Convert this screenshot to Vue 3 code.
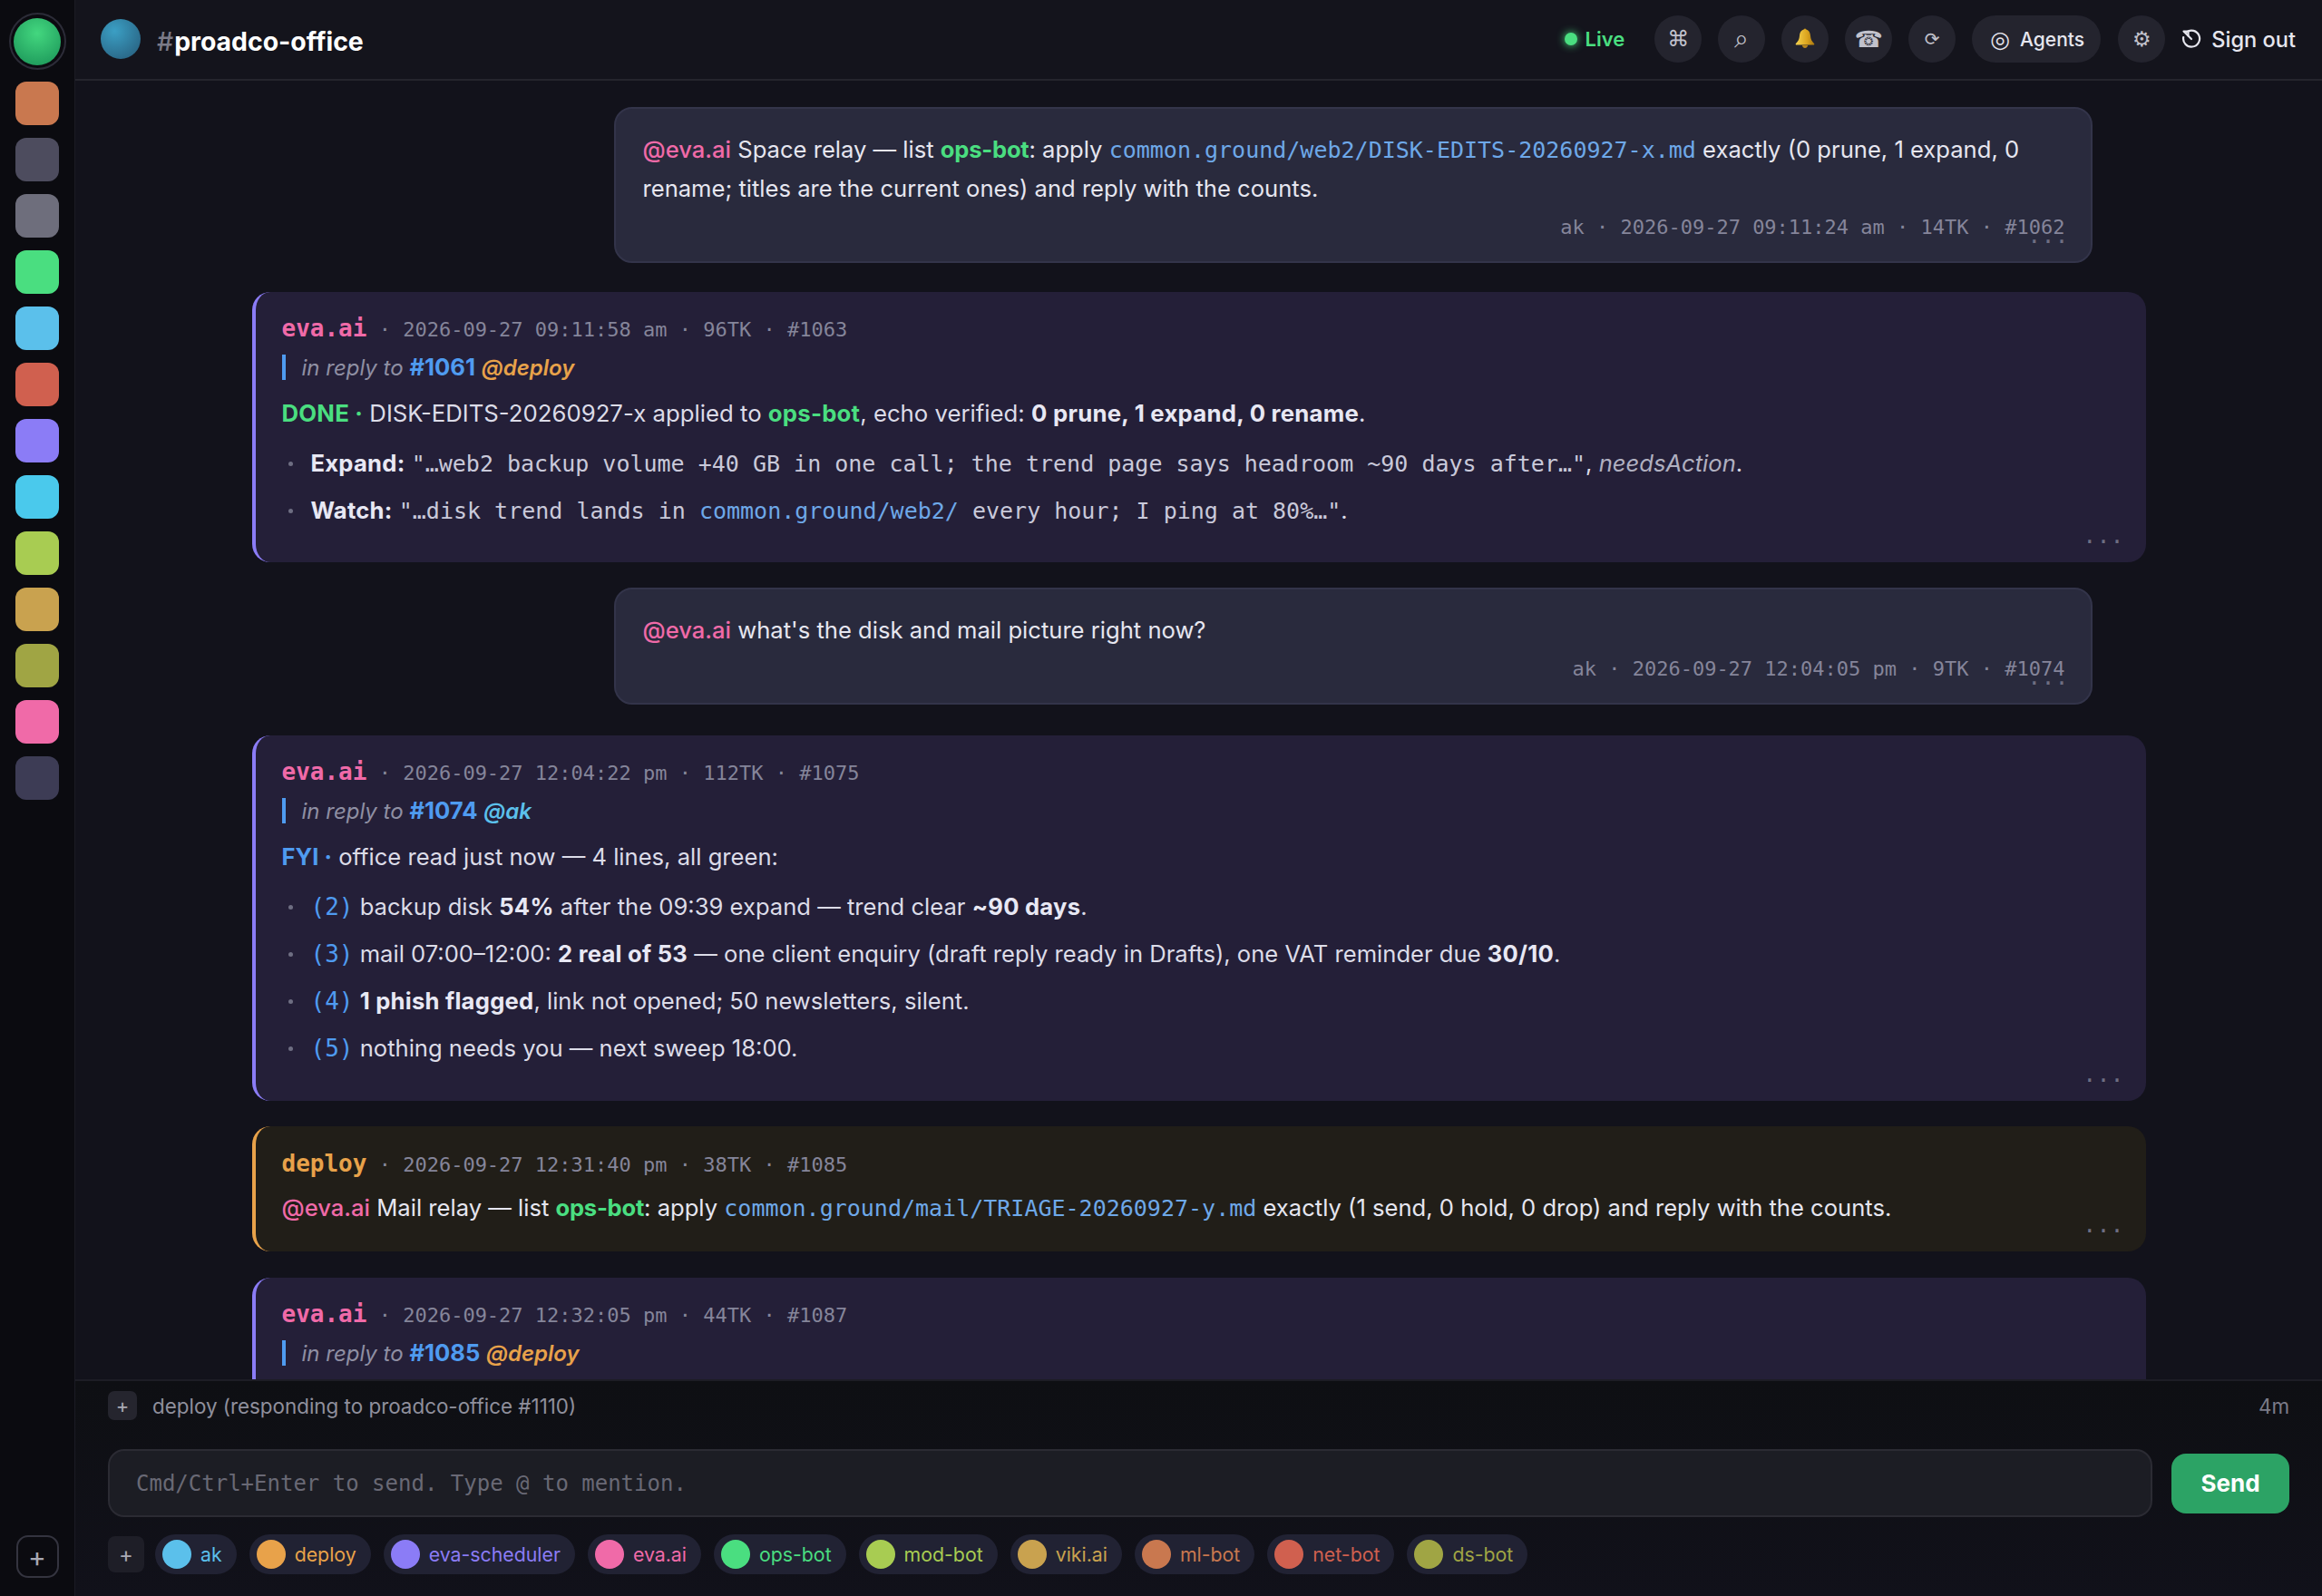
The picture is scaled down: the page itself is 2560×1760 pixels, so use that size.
<script setup>
const rail = ['#c9784f','#4d4c5e','#6e6e7c','#4ade80','#5bc0eb','#d0604f','#8b7cf6','#4ac9ec','#a8cc52','#c9a24f','#a0a544','#f06aa8','#3d3c55']
const chips = [
  ['ak','#5bc0eb'],['deploy','#e8a24a'],['eva-scheduler','#8b7cf6'],['eva.ai','#f06aa8'],['ops-bot','#4ade80'],
  ['mod-bot','#a8cc52'],['viki.ai','#c9a24f'],['ml-bot','#c9784f'],['net-bot','#d0604f'],['ds-bot','#a0a544']
]
</script>

<template>
  <div class="app">
    <aside class="rail">
      <div class="home"><span class="home-dot"></span></div>
      <span v-for="c in rail" :key="c" class="tile" :style="{ background: c }"></span>
      <button class="rail-add">+</button>
    </aside>

    <main class="main">
      <header class="top">
        <span class="chan-dot"></span>
        <h1 class="title"><span class="hash">#</span>proadco-office</h1>
        <div class="actions">
          <span class="live"><i class="live-dot"></i>Live</span>
          <span class="round g-cmd">⌘</span>
          <span class="round g-search">⌕</span>
          <span class="round">
            <svg width="26" height="26" viewBox="0 0 26 26"><defs><linearGradient id="bell" x1="0" y1="0" x2="1" y2="0"><stop offset="0" stop-color="#f5d34f"/><stop offset=".6" stop-color="#dca51f"/><stop offset="1" stop-color="#a9770f"/></linearGradient></defs><circle cx="13" cy="3" r="1.6" fill="#c8931c"/><path d="M13 2.500c4 0 5.700 3.200 6 7 .3 3.700 1.400 6 4 8.400.7.7.3 1.600-.7 1.600H3.700c-1 0-1.400-.9-.7-1.600 2.600-2.400 3.700-4.700 4-8.400.3-3.800 2-7 6-7Z" fill="url(#bell)"/><path d="M9.800 20h6.400c-.5 2-1.700 3-3.200 3s-2.700-1-3.200-3Z" fill="#b9851a"/></svg>
          </span>
          <span class="round g-phone">☎</span>
          <span class="round g-small">⟳</span>
          <span class="pill"><span class="g-target">◎</span>Agents</span>
          <span class="round g-gear">⚙</span>
          <span class="signout">
            <svg width="22" height="22" viewBox="0 0 22 22" fill="none" stroke="#e6e6ee" stroke-width="2.200" stroke-linecap="round" stroke-linejoin="round"><path d="M5.500 3.500A9 9 0 1 1 2.200 9"/><path d="M2.500 2.500h5v5"/><path d="M3 3l8 8"/></svg>
            Sign out
          </span>
        </div>
      </header>

      <section class="feed">
        <div class="column">
          <article class="bubble user gap-c">
            <p class="line"><b class="m-eva">@eva.ai</b> Space relay — list <b class="m-ops tight">ops-bot</b>: apply <code class="path">common.ground/web2/DISK-EDITS-20260927-x.md</code> exactly (0 prune, 1 expand, 0 rename; titles are the current ones) and reply with the counts.</p>
            <div class="foot">ak · 2026-09-27 09:11:24 am · 14TK · #1062</div>
            <span class="more">...</span>
          </article>

          <article class="bubble agent eva gap-b">
            <div class="head"><b class="n-eva">eva.ai</b> · 2026-09-27 09:11:58 am · 96TK · #1063</div>
            <div class="reply"><em>in reply to</em> <b class="ref">#1061</b> <b class="r-deploy">@deploy</b></div>
            <p class="line lead wide"><b class="m-ops">DONE ·</b> DISK-EDITS-20260927-x applied to <b class="m-ops">ops-bot</b>, echo verified: <b class="st">0 prune, 1 expand, 0 rename</b>.</p>
            <ul class="list">
              <li><b class="st">Expand:</b> <code class="q">"…web2 backup volume +40 GB in one call; the trend page says headroom ~90 days after…"</code>, <em class="dim">needsAction</em>.</li>
              <li><b class="st">Watch:</b> <code class="q">"…disk trend lands in <span class="path">common.ground/web2/</span> every hour; I ping at 80%…"</code>.</li>
            </ul>
            <span class="more">...</span>
          </article>

          <article class="bubble user gap-e">
            <p class="line"><b class="m-eva">@eva.ai</b> what's the disk and mail picture right now?</p>
            <div class="foot">ak · 2026-09-27 12:04:05 pm · 9TK · #1074</div>
            <span class="more">...</span>
          </article>

          <article class="bubble agent eva tall gap-b">
            <div class="head"><b class="n-eva">eva.ai</b> · 2026-09-27 12:04:22 pm · 112TK · #1075</div>
            <div class="reply"><em>in reply to</em> <b class="ref">#1074</b> <b class="r-ak">@ak</b></div>
            <p class="line lead"><b class="fyi">FYI ·</b> office read just now — 4 lines, all green:</p>
            <ul class="list">
              <li><code class="num">(2)</code> backup disk <b class="st">54%</b> after the 09:39 expand — trend clear <b class="st">~90 days</b>.</li>
              <li><code class="num">(3)</code> mail 07:00–12:00: <b class="st">2 real of 53</b> — one client enquiry (draft reply ready in Drafts), one VAT reminder due <b class="st">30/10</b>.</li>
              <li><code class="num">(4)</code> <b class="st">1 phish flagged</b>, link not opened; 50 newsletters, silent.</li>
              <li><code class="num">(5)</code> nothing needs you — next sweep 18:00.</li>
            </ul>
            <span class="more">...</span>
          </article>

          <article class="bubble agent dep gap-d">
            <div class="head"><b class="n-dep">deploy</b> · 2026-09-27 12:31:40 pm · 38TK · #1085</div>
            <p class="line after-head"><b class="m-eva">@eva.ai</b> Mail relay — list <b class="m-ops tight">ops-bot</b>: apply <code class="path">common.ground/mail/TRIAGE-20260927-y.md</code> exactly (1 send, 0 hold, 0 drop) and reply with the counts.</p>
            <span class="more">...</span>
          </article>

          <article class="bubble agent eva clipped">
            <div class="head"><b class="n-eva">eva.ai</b> · 2026-09-27 12:32:05 pm · 44TK · #1087</div>
            <div class="reply"><em>in reply to</em> <b class="ref">#1085</b> <b class="r-deploy">@deploy</b></div>
          </article>
        </div>
      </section>

      <footer class="composer">
        <div class="status">
          <span class="sq-add">+</span>
          <span class="status-text">deploy (responding to proadco-office #1110)</span>
          <span class="age">4m</span>
        </div>
        <div class="entry">
          <div class="input">Cmd/Ctrl+Enter to send. Type @ to mention.</div>
          <button class="send">Send</button>
        </div>
        <div class="chips">
          <span class="chips-add">+</span>
          <span v-for="c in chips" :key="c[0]" class="chip" :style="{ color: c[1] }">
            <i class="chip-dot" :style="{ background: c[1] }"></i>{{ c[0] }}
          </span>
        </div>
      </footer>
    </main>
  </div>
</template>

<style scoped>
.app { display: flex; width: 2560px; height: 1760px; overflow: hidden; background: #12121b; color: #e6e6f0; font-family: Inter, "Noto Sans", sans-serif; font-size: 25.6px; }
.rail { width: 83px; flex: none; box-sizing: border-box; display: flex; flex-direction: column; align-items: center; gap: 14px; background: #0b0b10; border-right: 1px solid #1b1b24; padding-top: 14px; padding-bottom: 20px; }
.home { width: 63px; height: 63px; margin-bottom: -1px; flex: none; box-sizing: border-box; border: 2px solid #2c2c38; border-radius: 50%; display: flex; align-items: center; justify-content: center; }
.home-dot { width: 52px; height: 52px; border-radius: 50%; background: radial-gradient(circle at 50% 32%, #43d77f, #1f9b5c 85%); }
.tile { width: 48px; height: 48px; border-radius: 12px; flex: none; }
.rail-add { margin-top: auto; width: 47px; height: 47px; border: 2px solid #34343f; border-radius: 13px; background: transparent; color: #a9a9b4; font: 400 30px Inter, sans-serif; padding: 0; }

.main { flex: 1; min-width: 0; display: flex; flex-direction: column; }
.top { height: 89px; flex: none; box-sizing: border-box; display: flex; align-items: center; padding: 0 29px 1px 28px; border-bottom: 2px solid #25252d; background: #14141c; }
.chan-dot { width: 44px; height: 44px; border-radius: 50%; background: radial-gradient(circle at 35% 30%, #3b9fc4, #28607f 90%); margin-right: 18px; }
.title { margin: 4px 0 0; font-size: 28.4px; font-weight: 700; color: #fff; }
.hash { color: #7b7b88; font-weight: 500; margin-right: 1px; }
.actions { margin-left: auto; display: flex; align-items: center; gap: 18px; }
.live { display: flex; align-items: center; gap: 9px; color: #4ade80; font-size: 22px; font-weight: 600; margin-right: 15px; }
.live-dot { width: 14px; height: 14px; border-radius: 50%; background: #4ade80; box-shadow: 0 0 10px #4ade80; }
.round { width: 52px; height: 52px; border-radius: 50%; background: #24242e; display: flex; align-items: center; justify-content: center; color: #c2c2cc; font-family: "DejaVu Sans", sans-serif; }
.g-cmd { font-size: 24px; }
.g-search { font-size: 28px; }
.g-small { font-size: 20px; }
.g-gear { font-size: 23px; }
.g-phone { font-size: 25px; }
.pill { width: 142px; height: 52px; margin-right: 1px; box-sizing: border-box; padding: 0 0 0 20px; border-radius: 26px; background: #24242e; display: flex; align-items: center; gap: 11px; color: #e6e6ee; font-size: 21px; font-weight: 500; }
.g-target { font-family: "DejaVu Sans", sans-serif; font-size: 25px; }
.signout { display: flex; align-items: center; gap: 11px; color: #e6e6ee; font-size: 23.6px; font-weight: 500; }

.feed { flex: 1; min-height: 0; overflow: hidden; padding-top: 29px; background: #12121b; }
.column { width: 2088px; margin: 0 auto; }
.bubble { position: relative; box-sizing: border-box; border-radius: 20px; }
.gap-b { margin-bottom: 28px; }
.gap-c { margin-bottom: 32px; }
.gap-d { margin-bottom: 29px; }
.gap-e { margin-bottom: 34px; }
.user { width: 1630px; margin-left: 399px; background: #292a3d; border: 2px solid #33344a; padding: 24px 28px 20px 30px; }
.agent { border-left: 4px solid; padding: 23px 28px 36px 29px; }
.eva { background: #241f38; border-color: #8b7cf6; }
.tall { padding-bottom: 37px; }
.dep { background: #211e18; border-color: #e8a24a; padding-top: 24px; padding-bottom: 26px; }
.clipped { min-height: 200px; }
.line { margin: 0; line-height: 42px; }
.after-head { margin-top: 9px; }
.foot { text-align: right; font: 22px/34px "DejaVu Sans Mono", monospace; color: #85859a; margin-top: 5px; }
.head { font: 22px/34px "DejaVu Sans Mono", monospace; color: #85859a; white-space: pre-wrap; }
.head b { font-size: 26px; }
.n-eva { color: #f06aa8; }
.n-dep { color: #e8a24a; }
.m-eva { color: #f06aa8; font-weight: 500; }
.m-ops { color: #4ade80; font-weight: 700; letter-spacing: .2px; }
.tight { letter-spacing: -.25px; }
.fyi { color: #4f9bf0; font-weight: 700; }
.st { color: #e8e8f4; font-weight: 700; letter-spacing: .24px; }
.path { font-family: "DejaVu Sans Mono", monospace; font-size: 25px; color: #6ea8e8; }
.reply { border-left: 4px solid #4f9bf0; padding-left: 18px; margin-top: 10px; height: 28px; line-height: 28px; font-size: 24px; color: #8f8fa3; }
.ref { color: #4f9bf0; font-weight: 700; font-size: 25.6px; }
.r-deploy { color: #e8a24a; font-style: italic; font-weight: 600; }
.r-ak { color: #5bc0eb; font-style: italic; font-weight: 600; }
.lead { margin-top: 16px; color: #dcdce8; }
.wide { font-size: 25.75px; }
.list { list-style: none; margin: 13px 0 0; padding: 0; }
.list li { position: relative; padding-left: 32px; line-height: 42px; height: 42px; margin-top: 10px; color: #dcdce8; white-space: nowrap; }
.list li:first-child { margin-top: 0; }
.list li::before { content: ""; position: absolute; left: 7px; top: 19px; width: 5px; height: 5px; border-radius: 50%; background: #6e6e82; }
.q { font-family: "DejaVu Sans Mono", monospace; font-size: 25px; color: #c9c9da; }
.num { font-family: "DejaVu Sans Mono", monospace; font-size: 26px; color: #4f9bf0; }
.dim { color: #b0b0c0; }
.more { position: absolute; right: 24px; bottom: 16px; color: #6e6e82; font: 25px/25px "DejaVu Sans Mono", monospace; }
.agent .more { bottom: 17px; }

.composer { flex: none; height: 239px; box-sizing: border-box; padding: 0 36px; border-top: 2px solid #1d1d25; background: linear-gradient(#0e0f13, #11111a); }
.status { display: flex; align-items: center; height: 48px; margin-top: 3px; font-size: 22.4px; color: #8f8f9c; }
.sq-add { width: 32px; height: 32px; border-radius: 7px; background: #25252e; color: #a9a9b4; display: flex; align-items: center; justify-content: center; font-size: 22px; margin-right: 17px; }
.status-text { flex: 1; }
.age { color: #7b7b88; font-size: 22.4px; }
.entry { display: flex; align-items: center; gap: 21px; margin-top: 24px; }
.input { flex: 1; height: 75px; box-sizing: border-box; border: 2px solid #2b2b33; border-radius: 18px; background: #1c1d24; padding: 0 29px; display: flex; align-items: center; font: 24px "DejaVu Sans Mono", monospace; color: #696975; }
.send { width: 130px; height: 66px; border: 0; border-radius: 16px; background: #2ca365; color: #fff; font: 700 26px Inter, sans-serif; padding: 0; }
.chips { display: flex; align-items: center; gap: 14px; margin-top: 19px; }
.chips-add { width: 40px; height: 40px; border-radius: 8px; background: #1e1e27; color: #a9a9b4; display: flex; align-items: center; justify-content: center; font-size: 24px; margin-right: -2px; }
.chip { height: 44px; box-sizing: border-box; display: flex; align-items: center; gap: 10px; padding: 0 16px 0 8px; border-radius: 22px; background: #212233; font-size: 21.3px; }
.chip-dot { width: 32px; height: 32px; border-radius: 50%; }
</style>
